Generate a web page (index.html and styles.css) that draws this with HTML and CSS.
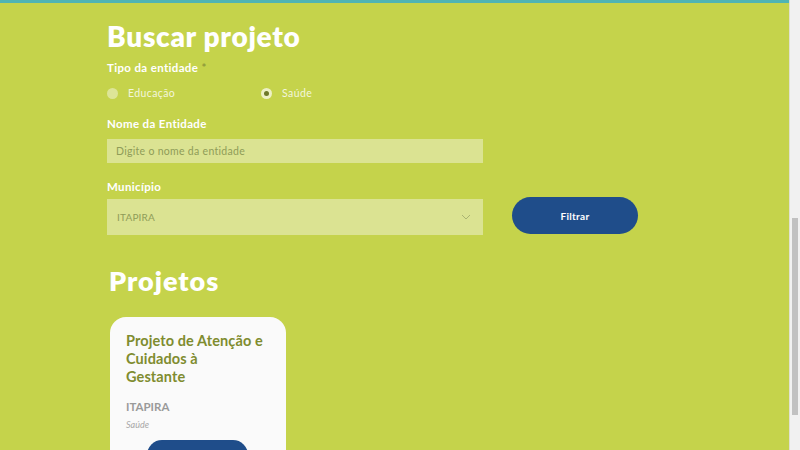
FILE: index.html
```html
<!DOCTYPE html>
<html lang="pt-BR">
<head>
<meta charset="utf-8">
<title>Buscar projeto</title>
<link rel="stylesheet" href="styles.css">
</head>
<body>
<div class="frame">
  <main class="page">
    <div class="topbar"></div>
    <div class="content">
      <h1 class="title">Buscar projeto</h1>
      <div class="label label-tipo">Tipo da entidade <span class="req">*</span></div>
      <div class="radios">
        <label class="radio"><span class="dot"></span>Educação</label>
        <label class="radio"><span class="dot checked"></span>Saúde</label>
      </div>
      <div class="label label-name">Nome da Entidade</div>
      <div class="input">Digite o nome da entidade</div>
      <div class="label label-mun">Município</div>
      <div class="row">
        <div class="select">
          <span>ITAPIRA</span>
          <svg class="chev" width="10" height="6" viewBox="0 0 10 6"><path d="M1 1l4 4 4-4" fill="none" stroke="#aab472" stroke-width="1"/></svg>
        </div>
        <button class="btn">Filtrar</button>
      </div>
      <h2 class="title2">Projetos</h2>
      <div class="card">
        <div class="card-title">Projeto de Atenção e<br>Cuidados à<br>Gestante</div>
        <div class="card-city">ITAPIRA</div>
        <div class="card-type">Saúde</div>
        <div class="card-btn"></div>
      </div>
    </div>
  </main>
  <div class="scrollbar"><div class="thumb"></div></div>
</div>
</body>
</html>
```
FILE: styles.css
```css
* { box-sizing: border-box; }
html, body { margin: 0; padding: 0; height: 100%; overflow: hidden; }
body { font-family: Lato, "Open Sans", sans-serif; background: #c5d34b; }
.frame { display: flex; height: 450px; width: 800px; }
.page { flex: 1; background: #c5d34b; overflow: hidden; }
.topbar { height: 3px; background: #4fb4b4; }
.content { padding-left: 107px; }
.title { margin: 16px 0 0; font-size: 28px; line-height: 34px; font-weight: 800; color: #fff; letter-spacing: 0.7px; }
.label { font-size: 11.5px; font-weight: 700; color: #fff; line-height: 14px; letter-spacing: 0.35px; }
.label-tipo { margin-top: 8px; }
.req { color: #8f9a3a; }
.radios { display: flex; margin-top: 11px; height: 14px; align-items: center; }
.radio { display: flex; align-items: center; font-size: 10.5px; color: #f3f6dc; width: 154px; letter-spacing: 0.4px; }
.dot { width: 11px; height: 11px; border-radius: 50%; background: #dde597; margin-right: 10px; position: relative; }
.dot.checked { background: #edf1c6; }
.dot.checked::after { content: ""; position: absolute; left: 3px; top: 3px; width: 5px; height: 5px; border-radius: 50%; background: #6e7a2a; }
.label-name { margin-top: 17px; }
.input { margin-top: 8px; width: 376px; height: 24px; background: #dbe392; font-size: 10.5px; color: #8f9c58; padding-left: 9px; line-height: 24px; letter-spacing: 0.3px; }
.label-mun { margin-top: 17px; }
.row { display: flex; align-items: center; margin-top: 5px; }
.select { width: 376px; height: 36px; background: #dbe392; display: flex; align-items: center; justify-content: space-between; padding: 0 12px 0 10px; font-size: 10px; color: #8f9c58; letter-spacing: 0.2px; }
.btn { margin-left: 29px; width: 126px; height: 37px; border: 0; border-radius: 19px; background: #1f4d8a; color: #fff; font-family: inherit; font-size: 10px; font-weight: 700; margin-top: -3px; letter-spacing: 0.3px; }
.title2 { margin: 30px 0 0 2px; font-size: 27px; line-height: 32px; font-weight: 800; color: #fff; letter-spacing: 1px; }
.card { margin: 20px 0 0 3px; width: 176px; height: 160px; background: #fafafa; border-radius: 16px; padding: 15px 16px 0 16px; }
.card-title { font-size: 14.5px; line-height: 18px; font-weight: 700; color: #7f8c2f; letter-spacing: 0.1px; white-space: nowrap; }
.card-city { margin-top: 14px; font-size: 11.5px; font-weight: 700; color: #9a9a9a; }
.card-type { margin-top: 6px; font-size: 9px; font-style: italic; color: #a8a8a8; }
.card-btn { margin: 10px 0 0 21px; width: 101px; height: 30px; border-radius: 15px; background: #1f4d8a; }
.scrollbar { width: 11px; background: #f1f1f1; padding: 218px 2px 0; border-left: 1px solid #e0e0d0; }
.thumb { height: 197px; background: #c1c1c1; }
```
